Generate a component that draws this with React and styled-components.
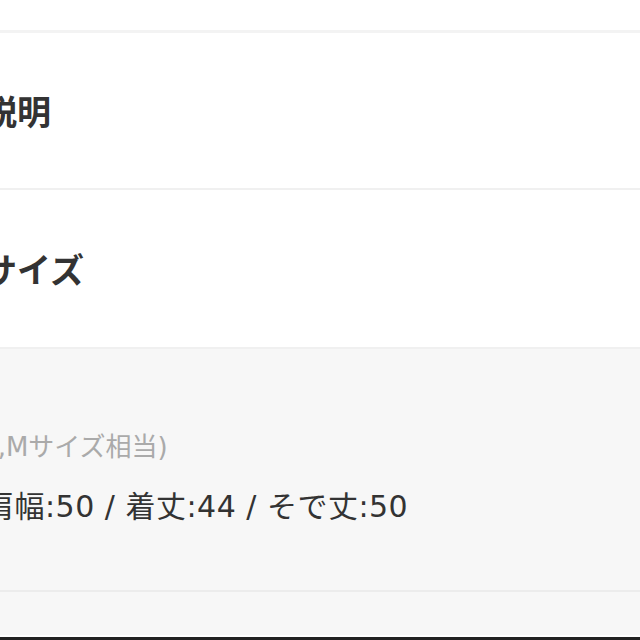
import React from "react";
import styled, { createGlobalStyle } from "styled-components";

const Global = createGlobalStyle`
  html, body { margin: 0; padding: 0; background: #ffffff; }
  body { width: 640px; height: 640px; overflow: hidden; font-family: "Noto Sans CJK JP", "Noto Sans", sans-serif; }
`;

const Page = styled.div`
  width: 640px;
  height: 640px;
  overflow: hidden;
  display: flex;
  flex-direction: column;
  background: #ffffff;
`;

const TopStrip = styled.div`
  height: 30px;
  background: #ffffff;
  border-bottom: 3px solid #f3f3f3;
`;

const HeadSection = styled.section`
  height: ${(p) => p.$h}px;
  display: flex;
  align-items: center;
  border-bottom: 2px solid #f0f0f0;
  background: #ffffff;
  overflow: hidden;
`;

const Heading = styled.h2`
  margin: 0 0 0 -119px;
  font-size: 34px;
  font-weight: 700;
  color: #333333;
  white-space: nowrap;
  line-height: 1;
`;

const Detail = styled.section`
  background: #f7f7f7;
  height: 243px;
  border-bottom: 2px solid #ececec;
  display: flex;
  flex-direction: column;
  overflow: hidden;
  padding-top: 80px;
  box-sizing: border-box;
  font-family: "DejaVu Sans", "Noto Sans CJK JP", sans-serif;
`;

const Note = styled.p`
  margin: 0 0 0 -29px;
  font-size: 26px;
  color: #aaaaaa;
  white-space: nowrap;
  line-height: 36px;
`;

const Measure = styled.p`
  margin: 24px 0 0 -16px;
  font-size: 30px;
  letter-spacing: 0.5px;
  color: #333333;
  white-space: nowrap;
  line-height: 36px;
`;

const Footer = styled.div`
  flex: 1;
  background: #f7f7f7;
  border-bottom: 3px solid #222222;
  box-shadow: inset 0 -2px 0 #ffffff;
`;

export default function App() {
  return (
    <>
      <Global />
      <Page>
        <TopStrip />
        <HeadSection $h={155}>
          <Heading>商品の説明</Heading>
        </HeadSection>
        <HeadSection $h={157}>
          <Heading>商品のサイズ</Heading>
        </HeadSection>
        <Detail>
          <Note>(S,Mサイズ相当)</Note>
          <Measure>肩幅:50 / 着丈:44 / そで丈:50</Measure>
        </Detail>
        <Footer />
      </Page>
    </>
  );
}
